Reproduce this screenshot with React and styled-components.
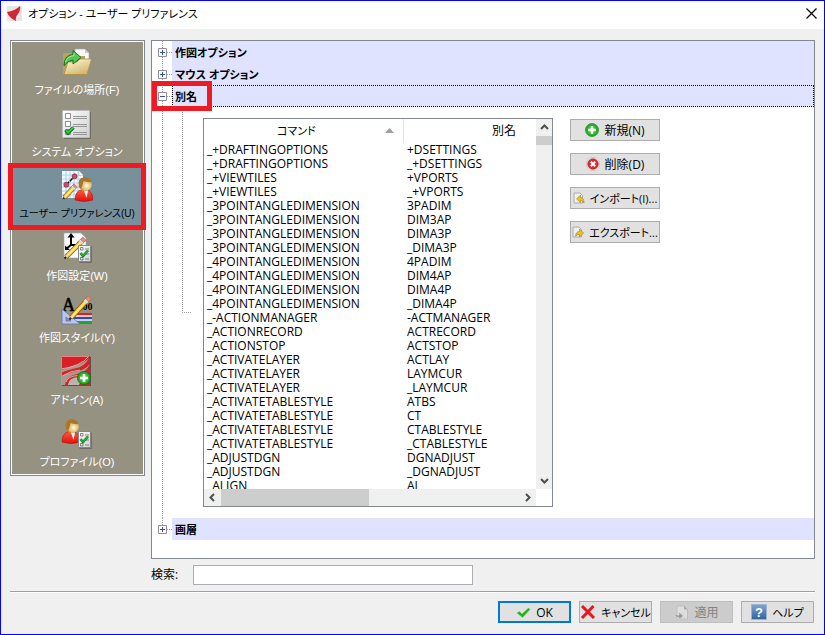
import React, { useState } from 'react';
import styled, { createGlobalStyle, css } from 'styled-components';

const GlobalStyle = createGlobalStyle`
    * {
        box-sizing: border-box;
    }

    body {
        margin: 0;
        background: #f0f0f0;
        color: #000;
        font: 12px/14px "Open Sans", "Noto Sans CJK JP", sans-serif;
        font-feature-settings: "palt";
    }

    button, input {
        font: inherit;
        font-feature-settings: inherit;
        color: inherit;
    }

    svg {
        flex: none;
    }
`;

const Dialog = styled.div`
    display: flex;
    flex-direction: column;
    min-height: 100vh;
    border: 1px solid #00f;
`;

const TitleBar = styled.header`
    display: flex;
    align-items: center;
    gap: 6px;
    height: 28px;
    padding: 0 7px 4px 6px;
    background: #fff;
`;

const Title = styled.h1`
    flex: 1;
    margin: 0;
    padding-top: 2px;
    font-size: 11px;
    font-weight: 400;
`;

const CloseButton = styled.button`
    display: flex;
    padding: 0;
    border: 0;
    background: none;
`;

const Main = styled.div`
    display: flex;
    align-items: flex-start;
    gap: 6px;
    padding: 11px 9px 0;
`;

const Sidebar = styled.nav`
    position: relative;
    flex: none;
    width: 135px;
    border: 1px solid #828790;

    &::after {
        content: '';
        position: absolute;
        inset: 0;
        border: 1px solid #fff;
        pointer-events: none;
    }
`;

const NavItem = styled.button`
    position: relative;
    display: flex;
    flex-direction: column;
    align-items: center;
    width: 100%;
    height: 62px;
    padding: 5px 1px 0 0;
    border: 0;
    white-space: nowrap;
    font-family: "Liberation Sans", "Noto Sans CJK JP", sans-serif;
    font-size: ${props => (props.$long ? 10 : 11)}px;
    line-height: 24px;
    background: ${props => (props.$active ? '#78909c' : '#969282')};
    color: ${props => (props.$active ? '#000' : '#fff')};
`;

const Marker = styled.span`
    position: absolute;
    z-index: 1;
    border: 5px solid #ed1c24;
    pointer-events: none;
    ${props => props.$around === 'nav' && css`
        inset: -2px -2px -3px -3px;
    `}
    ${props => props.$around === 'row' && css`
        inset: -4px auto -4px 0;
        width: 60px;
    `}
`;

const Panel = styled.section`
    flex: 1;
    min-width: 0;
    border: 1px solid #828790;
    padding-bottom: 18px;
    background: #fff;
`;

const TreeRow = styled.div`
    position: relative;
    display: flex;
    height: 22px;
`;

const dots = 'linear-gradient(#a0a0a0 50%, transparent 50%) 10px 0 / 1px 2px repeat-y';

const Gutter = styled.div`
    flex: none;
    display: flex;
    align-items: center;
    width: 20px;
    padding-left: 6px;
    background: ${props => (props.$last
        ? `linear-gradient(#fff, #fff) 0 100% / 100% 50% no-repeat, ${dots}`
        : dots)};

    &::after {
        content: '';
        flex: 1;
        border-top: ${props => (props.$plain ? '0' : '1px dotted #a0a0a0')};
    }
`;

const Expander = styled.button`
    display: flex;
    padding: 0;
    border: 0;
    background: none;
`;

const TreeTitle = styled.h2`
    flex: 1;
    margin: 0;
    padding-left: 2px;
    border: 1px ${props => (props.$focused ? 'dotted #000' : 'solid #dfe3ff')};
    background: #dfe3ff;
    font-size: 11px;
    font-weight: 700;
    line-height: 22px;
`;

const TreeBody = styled.div`
    display: flex;
`;

const Branch = styled.div`
    flex: none;
    width: 9px;
    height: 206px;
    margin: 0 12px 0 10px;
    border: dotted #a0a0a0;
    border-width: 0 0 1px 1px;
`;

const ListBox = styled.div`
    display: grid;
    grid-template-columns: 1fr 16px;
    grid-template-rows: 370px 17px;
    flex: 0 1 350px;
    min-width: 0;
    margin: 11px 17px 11px 0;
    border: 1px solid #828790;
`;

const Viewport = styled.div`
    overflow: hidden;
`;

const AliasTable = styled.table`
    width: 400px;
    table-layout: fixed;
    border-collapse: separate;
    border-spacing: 0;

    th {
        height: 24px;
        padding: 0;
        font-weight: 400;
    }

    th:first-child {
        border-right: 1px solid #e5e5e5;
    }

    td {
        height: 14px;
        padding: 0 3px;
        line-height: 14px;
    }
`;

const SortHeader = styled.span`
    display: flex;
    align-items: center;
    justify-content: space-between;
    padding: 0 9px 0 73px;
    font-size: 11px;
`;

const ScrollBar = styled.div`
    display: flex;
    flex-direction: ${props => (props.$vertical ? 'column' : 'row')};
    justify-content: space-between;
    background: #f0f0f0;
`;

const ScrollButton = styled.button`
    display: flex;
    align-items: center;
    justify-content: center;
    width: ${props => (props.$vertical ? 16 : 17)}px;
    height: 17px;
    padding: 0;
    border: 0;
    background: none;
`;

const Thumb = styled.div`
    background: #cdcdcd;
    ${props => (props.$vertical
        ? css`height: 9px; margin-bottom: auto;`
        : css`width: 148px; margin-right: auto;`)}
`;

const Actions = styled.div`
    display: flex;
    flex-direction: column;
    gap: 12px;
    flex: none;
    width: 90px;
    margin: 12px 0;
`;

const Button = styled.button`
    display: flex;
    align-items: center;
    justify-content: center;
    gap: 5px;
    height: 22px;
    padding: 0;
    white-space: nowrap;
    border: 1px solid #adadad;
    background: #e1e1e1;
    font-size: ${props => (props.$kana ? 11 : 12)}px;
    line-height: 18px;

    span {
        padding-top: 2px;
    }

    &:disabled {
        border-color: #bfbfbf;
        background: #ccc;
        color: #838383;
    }

    ${props => props.$primary && css`
        border: 2px solid #0078d7;
    `}
`;

const Search = styled.form`
    display: flex;
    align-items: center;
    padding: 6px 9px 6px 150px;
`;

const SearchLabel = styled.label`
    width: 42px;
`;

const SearchInput = styled.input`
    flex: 0 1 280px;
    min-width: 0;
    height: 20px;
    padding: 0 3px;
    border: 1px solid #abadb3;
    background: #fff;
`;

const Footer = styled.footer`
    display: grid;
    grid-template-columns: repeat(4, 73px);
    justify-content: end;
    gap: 8px;
    margin: 0 9px;
    padding: 9px 1px 11px;
    border-top: 1px solid #a0a0a0;
    box-shadow: inset 0 1px #fff;
`;

const Icon = ({ size = 32, box = 32, children, ...rest }) => (
    <svg width={size} height={size} viewBox={`0 0 ${box} ${box}`} aria-hidden="true" {...rest}>{children}</svg>
);

const HiddenSvg = styled.svg`
    position: absolute;
`;

const Gradients = () => (
    <HiddenSvg width="0" height="0" aria-hidden="true">
        <defs>
            <linearGradient id="folder" x2="0.6" y2="1">
                <stop stopColor="#fffbe2" />
                <stop offset="1" stopColor="#d4b76c" />
            </linearGradient>
            <linearGradient id="sheet" x2="1" y2="1">
                <stop stopColor="#fff" />
                <stop offset="1" stopColor="#cfcfcf" />
            </linearGradient>
            <linearGradient id="red" x2="0" y2="1">
                <stop stopColor="#ff5a3c" />
                <stop offset="1" stopColor="#e00f0f" />
            </linearGradient>
            <radialGradient id="face" cx="0.6" cy="0.6">
                <stop stopColor="#fffdd0" />
                <stop offset="1" stopColor="#cfa651" />
            </radialGradient>
            <radialGradient id="green">
                <stop stopColor="#62df62" />
                <stop offset="1" stopColor="#18a018" />
            </radialGradient>
            <linearGradient id="blue" x2="0" y2="1">
                <stop stopColor="#7fa6d3" />
                <stop offset="1" stopColor="#33629f" />
            </linearGradient>
        </defs>
    </HiddenSvg>
);

const Pencil = ({ x1, y1, x2, y2 }) => {
    const dx = x2 - x1;
    const dy = y2 - y1;
    const at = t => [x1 + dx * t, y1 + dy * t];
    const line = (from, to, color, width) => {
        const [ax, ay] = at(from);
        const [bx, by] = at(to);
        return <line x1={ax} y1={ay} x2={bx} y2={by} stroke={color} strokeWidth={width} />;
    };
    return (
        <g>
            {line(0.02, 0.12, '#222', 2)}
            {line(0.1, 0.98, '#8a5a10', 5)}
            {line(0.1, 0.2, '#f3d6a0', 3)}
            {line(0.18, 0.8, '#f6cf3a', 3.6)}
            {line(0.18, 0.78, '#fff09a', 1.2)}
            {line(0.77, 0.86, '#ddd', 4.4)}
            {line(0.86, 0.98, '#e98a80', 4.4)}
        </g>
    );
};

const Person = ({ x, y }) => (
    <g transform={`translate(${x} ${y})`}>
        <path d="M0 23 Q0 14 7 12.500 H11 Q18 14 18 23 Q9 26 0 23Z" fill="url(#red)" stroke="#b51010" strokeWidth="0.600" />
        <path d="M9 13.500 L13 13.500 L11.500 21Z" fill="#fff" />
        <circle cx="10.500" cy="7.500" r="6.300" fill="url(#face)" />
        <path d="M4 10 Q2 0.500 9.500 0.300 Q15.500 0.300 16.500 5 Q12 5.500 8.500 4 Q8 7.500 6 12 Q4.500 12 4 10Z" fill="#a8772b" />
    </g>
);

const Checklist = ({ x, y }) => (
    <g transform={`translate(${x} ${y})`}>
        <path d="M1.500 1.500 H14 V18 H1.500Z" fill="#555" opacity="0.6" />
        <path d="M0.500 0.500 H12.500 V16.500 H0.500Z" fill="url(#sheet)" stroke="#888" />
        <path d="M2.500 2.500 H5 V5 H2.500Z M2.500 12.500 H5 V15 H2.500Z M7 4 H11 M7 14 H11 M8 9 H11" fill="none" stroke="#777" strokeWidth="0.900" />
        <path d="M2.500 8 L5 11 L10 5.500" fill="none" stroke="#0c8a22" strokeWidth="2.600" />
        <path d="M2.500 8 L5 10.800 L10 5.500" fill="none" stroke="#3bc452" strokeWidth="1" />
    </g>
);

const FilesIcon = () => (
    <Icon>
        <path d="M14 3 H24 L28 7 V17 H14Z" fill="#fafafa" stroke="#aaa" strokeWidth="0.700" />
        <path d="M24 3 V7 H28Z" fill="#ccc" />
        <path d="M2 9 Q2 7 4 7 H10 L12 10 H24 V28 H2Z" fill="#b9a15f" />
        <path d="M3 28.500 L7 16 H16 L19 13 H30.500 L26 28.500Z" fill="url(#folder)" stroke="#b08f42" strokeWidth="0.800" />
        <path d="M3 20 Q3 9 12 8.500 V4.500 L20 11.500 L12 18 V14 Q7 14 3 20Z" fill="#53c653" stroke="#0b7d22" strokeWidth="1" />
        <path d="M4.500 16 Q6.500 10 13 9.700 V7" fill="none" stroke="#b3f0a4" strokeWidth="0.900" />
    </Icon>
);

const SystemIcon = () => (
    <Icon>
        <path d="M3 4 H30 V31 H3Z" fill="#555" opacity="0.6" />
        <path d="M1.500 2.500 H28.500 V29.500 H1.500Z" fill="url(#sheet)" stroke="#bbb" />
        <path d="M4.500 5.500 H9.500 V10.500 H4.500Z M4.500 13.500 H9.500 V18.500 H4.500Z M4.500 21.500 H9.500 V26.500 H4.500Z" fill="#fff" stroke="#8c8c8c" />
        <path d="M12 8.500 H26 M12 10.500 H26 M12 16.500 H26 M12 18.500 H26 M12 24.500 H26 M12 26.500 H26" stroke="#8d8d8d" strokeWidth="0.900" />
        <path d="M4.500 22 L7 25 L12.500 19.500" fill="none" stroke="#087516" strokeWidth="3.400" />
        <path d="M4.800 22 L7 24.600 L12.200 19.600" fill="none" stroke="#39cf4a" strokeWidth="1.600" />
    </Icon>
);

const UserIcon = () => (
    <Icon>
        <path d="M1 1 H18 L22 5 V28 H1Z" fill="#f4fbff" />
        <path d="M5 1 V28 M9 1 V28 M13 1 V28 M17 1 V28 M1 5 H21 M1 9 H22 M1 13 H22 M1 17 H22 M1 21 H22 M1 25 H22" stroke="#9dc8e8" strokeWidth="0.800" />
        <path d="M18 1 V5.500 H22" fill="#fff" stroke="#8ca" strokeWidth="0.600" />
        <path d="M5.300 14.700 L13.600 6.300" stroke="#111" strokeDasharray="4 1" strokeWidth="1.400" />
        <circle cx="5.300" cy="14.700" r="2.500" fill="#c8506c" stroke="#8c2040" strokeWidth="0.700" />
        <circle cx="13.600" cy="6.300" r="2.500" fill="#c8506c" stroke="#8c2040" strokeWidth="0.700" />
        <Pencil x1={2} y1={29} x2={15} y2={15} />
        <Person x={14} y={7} />
    </Icon>
);

const SettingsIcon = () => (
    <Icon>
        <path d="M3 1 H20 L25 6 V26 H3Z" fill="#f8fafc" stroke="#9aa9b5" strokeWidth="0.600" />
        <path d="M10 13 V3 M10 13 H19 M10 13 L5 17" stroke="#000" strokeWidth="2" />
        <path d="M6.500 5.500 L10 1 L13.500 5.500Z M16 9.500 L21 13 L16 16.500Z M4 13.500 V18 H9Z" />
        <Pencil x1={3} y1={27} x2={24} y2={6} />
        <Checklist x={17} y={13} />
    </Icon>
);

const StyleIcon = () => (
    <Icon>
        <text x="1" y="17" fontFamily="Liberation Serif" fontSize="18" stroke="#000" strokeWidth="0.500">A</text>
        <text x="19" y="16" fontFamily="Liberation Serif" fontSize="10" fontWeight="700">.00</text>
        <path d="M13 19 H31 V23 H13Z" fill="#df2020" />
        <path d="M13 23 H31 V27 H13Z" fill="#2749c9" />
        <path d="M13 22 H31 M13 26 H31" stroke="#fff" strokeWidth="1.400" />
        <path d="M13 27 H31 V30 H13Z" fill="#17a637" />
        <path fillRule="evenodd" d="M1 15 L19 30 H1Z M5 23 V27 H10Z" fill="#b8c5ef" stroke="#5e6ea8" strokeWidth="0.700" />
        <Pencil x1={8} y1={26} x2={29} y2={3} />
    </Icon>
);

const AddInIcon = () => (
    <Icon>
        <path d="M1 1 H30 V30 H1Z" fill="#5a3c36" opacity="0.8" />
        <path d="M0 0 H29 V29 H0Z" fill="#d91f26" />
        <path d="M0 14 Q8 11 16 9 Q23 7 28 2 Q24 10 16 12 Q6 14 0 17Z" fill="#a49a90" />
        <path d="M0 21 Q5 17 15 15.500 Q24 14 29 8 Q25 17 16 18 Q5 20 4 29 H0 V24Z" fill="#a49a90" />
        <path d="M7 28 Q8 22 17 21 L27 16 Q20 24 18 29 H7Z" fill="#bcb4ac" />
        <path d="M0 13 Q20 10 27 1 M1 20 Q10 14.500 19 14 M5 26 Q7 20 17 19.500" fill="none" stroke="#eed8d4" strokeWidth="0.700" />
        <path d="M0.500 28 V0.500 H28" fill="none" stroke="#ee7d7d" />
        <circle cx="23" cy="22" r="6.500" fill="url(#green)" stroke="#087018" strokeWidth="0.800" />
        <path d="M23 18 V26 M19 22 H27" stroke="#fff" strokeWidth="2.600" />
    </Icon>
);

const ProfileIcon = () => (
    <Icon>
        <Person x={1} y={1} />
        <Checklist x={17} y={13} />
    </Icon>
);

const AppLogo = () => (
    <Icon size={15} box={15}>
        <path d="M0 0 H15 V15 H0Z" fill="#e9e4e4" />
        <path d="M0 6 Q8 5 13 0 Q14 3 11 8 Q8 11 9 15 Q2 12 0 6Z" fill="#d5202f" />
        <path d="M2 8 Q9 8 13 2 M4 11 Q7 9 10 7" fill="none" stroke="#a34a55" strokeWidth="0.800" />
    </Icon>
);

const NewIcon = () => (
    <Icon size={14} box={14}>
        <circle cx="7" cy="7" r="6.500" fill="url(#green)" stroke="#249a2c" strokeWidth="0.800" />
        <path d="M7 3 V11 M3 7 H11" stroke="#fff" strokeWidth="2.400" />
    </Icon>
);

const DeleteIcon = () => (
    <Icon size={14} box={14}>
        <circle cx="7" cy="7" r="6.600" fill="#f5f5f5" stroke="#b5b5b5" strokeWidth="0.600" />
        <circle cx="7" cy="7" r="5.300" fill="#d62e35" stroke="#a52129" strokeWidth="0.600" />
        <path d="M4.800 4.800 L9.200 9.200 M9.200 4.800 L4.800 9.200" stroke="#fff" strokeWidth="2" />
    </Icon>
);

const TransferIcon = ({ out }) => (
    <Icon size={12} box={12}>
        <path d="M1 1 H7 L9.500 3.500 V11 H1Z" fill="#f0f0f0" stroke="#aaa" />
        {out
            ? <path d="M3.500 10 Q4 5.500 7.500 5.500 V3 L11.500 7 L7.500 11 V8.500 Q5 8.500 3.500 10Z" fill="#edc12e" stroke="#b38814" strokeWidth="0.700" />
            : <path d="M11 11 Q11 5.500 7.500 5.500 V3 L3.500 7 L7.500 10.500 V8.300 Q9.500 8.300 11 11Z" fill="#edc12e" stroke="#b38814" strokeWidth="0.700" />}
    </Icon>
);

const OkIcon = () => (
    <Icon size={15} box={15}>
        <path d="M1 8 L3.500 6.500 L6 9 L12.500 3 L14 4.500 L6.500 12.500Z" fill="#20b41c" stroke="#58cb4d" strokeWidth="0.500" />
    </Icon>
);

const CancelIcon = () => (
    <Icon size={16} box={16}>
        <path d="M2 2 L14 14 M13.500 2 L2 14" stroke="#e81620" strokeWidth="3" />
    </Icon>
);

const ApplyIcon = () => (
    <Icon size={15} box={15}>
        <path d="M3 1 H10 L13.500 4.500 V14 H3Z" fill="#dedede" stroke="#b6b6b6" strokeWidth="0.700" />
        <path d="M10 1 V4.500 H13.500" fill="#aaa" />
        <path d="M0.500 8 Q2 11 5 10 V7 L9.500 11 L5 14.500 V12.500 Q0.500 12.500 0.500 8Z" fill="#999" stroke="#ddd" strokeWidth="0.600" />
    </Icon>
);

const HelpIcon = () => (
    <Icon size={16} box={16}>
        <path d="M0.500 0.500 H15.500 V15.500 H0.500Z" fill="url(#blue)" stroke="#9bb4d0" />
        <text x="8" y="13" textAnchor="middle" fill="#fff" fontFamily="Liberation Sans" fontSize="13" fontWeight="700">?</text>
    </Icon>
);

const arrows = {
    up: 'M1 6 L4.500 2.500 L8 6',
    down: 'M1 3 L4.500 6.500 L8 3',
    left: 'M6 1 L2.500 4.500 L6 8',
    right: 'M3 1 L6.500 4.500 L3 8',
};

const Arrow = ({ dir }) => (
    <ScrollButton type="button" tabIndex={-1} aria-label={dir} $vertical={dir === 'up' || dir === 'down'}>
        <Icon size={9} box={9}><path d={arrows[dir]} fill="none" stroke="#505050" strokeWidth="2" /></Icon>
    </ScrollButton>
);

const pages = [
    { label: 'ファイルの場所(F)', icon: FilesIcon },
    { label: 'システム オプション', icon: SystemIcon },
    { label: 'ユーザー プリファレンス(U)', icon: UserIcon, long: true },
    { label: '作図設定(W)', icon: SettingsIcon },
    { label: '作図スタイル(Y)', icon: StyleIcon },
    { label: 'アドイン(A)', icon: AddInIcon },
    { label: 'プロファイル(O)', icon: ProfileIcon },
];

const aliases = [
    ['_+DRAFTINGOPTIONS', '+DSETTINGS'],
    ['_+DRAFTINGOPTIONS', '_+DSETTINGS'],
    ['_+VIEWTILES', '+VPORTS'],
    ['_+VIEWTILES', '_+VPORTS'],
    ['_3POINTANGLEDIMENSION', '3PADIM'],
    ['_3POINTANGLEDIMENSION', 'DIM3AP'],
    ['_3POINTANGLEDIMENSION', 'DIMA3P'],
    ['_3POINTANGLEDIMENSION', '_DIMA3P'],
    ['_4POINTANGLEDIMENSION', '4PADIM'],
    ['_4POINTANGLEDIMENSION', 'DIM4AP'],
    ['_4POINTANGLEDIMENSION', 'DIMA4P'],
    ['_4POINTANGLEDIMENSION', '_DIMA4P'],
    ['_-ACTIONMANAGER', '-ACTMANAGER'],
    ['_ACTIONRECORD', 'ACTRECORD'],
    ['_ACTIONSTOP', 'ACTSTOP'],
    ['_ACTIVATELAYER', 'ACTLAY'],
    ['_ACTIVATELAYER', 'LAYMCUR'],
    ['_ACTIVATELAYER', '_LAYMCUR'],
    ['_ACTIVATETABLESTYLE', 'ATBS'],
    ['_ACTIVATETABLESTYLE', 'CT'],
    ['_ACTIVATETABLESTYLE', 'CTABLESTYLE'],
    ['_ACTIVATETABLESTYLE', '_CTABLESTYLE'],
    ['_ADJUSTDGN', 'DGNADJUST'],
    ['_ADJUSTDGN', '_DGNADJUST'],
    ['_ALIGN', 'AL'],
];

const TreeNode = ({ title, open, focused, marked, last }) => (
    <TreeRow>
        <Gutter $last={last}>
            <Expander type="button" aria-label={title} aria-expanded={!!open}>
                <Icon size={9} box={9}>
                    <path d="M0.500 0.500 H8.500 V8.500 H0.500Z" fill="#f8f8f8" stroke="#919191" />
                    <path d={open ? 'M2 4.500 H7' : 'M2 4.500 H7 M4.500 2 V7'} stroke="#3c4f9c" />
                </Icon>
            </Expander>
        </Gutter>
        <TreeTitle $focused={focused}>{title}</TreeTitle>
        {marked && <Marker $around="row" />}
    </TreeRow>
);

const AliasList = () => (
    <ListBox>
        <Viewport>
            <AliasTable>
                <thead>
                    <tr>
                        <th scope="col">
                            <SortHeader>
                                コマンド
                                <Icon size={9} box={9}><path d="M0 6 L4.500 1 L9 6Z" fill="#a0a0a0" /></Icon>
                            </SortHeader>
                        </th>
                        <th scope="col">別名</th>
                    </tr>
                </thead>
                <tbody>
                    {aliases.map(([command, alias]) => (
                        <tr key={command + alias}>
                            <td>{command}</td>
                            <td>{alias}</td>
                        </tr>
                    ))}
                </tbody>
            </AliasTable>
        </Viewport>
        <ScrollBar $vertical>
            <Arrow dir="up" />
            <Thumb $vertical />
            <Arrow dir="down" />
        </ScrollBar>
        <ScrollBar>
            <Arrow dir="left" />
            <Thumb />
            <Arrow dir="right" />
        </ScrollBar>
    </ListBox>
);

const App = () => {
    const [page, setPage] = useState(2);
    const [query, setQuery] = useState('');

    return (
        <Dialog>
            <GlobalStyle />
            <Gradients />
            <TitleBar>
                <AppLogo />
                <Title>オプション - ユーザー プリファレンス</Title>
                <CloseButton type="button" aria-label="閉じる">
                    <Icon size={11} box={11}><path d="M0.500 0.500 L10.500 10.500 M10.500 0.500 L0.500 10.500" stroke="#000" strokeWidth="1.200" /></Icon>
                </CloseButton>
            </TitleBar>
            <Main>
                <Sidebar>
                    {pages.map(({ label, icon: PageIcon, long }, index) => (
                        <NavItem key={label} type="button" $active={index === page} $long={long} onClick={() => setPage(index)}>
                            <PageIcon />
                            {label}
                            {index === page && <Marker $around="nav" />}
                        </NavItem>
                    ))}
                </Sidebar>
                <Panel>
                    <TreeNode title="作図オプション" />
                    <TreeNode title="マウス オプション" />
                    <TreeNode title="別名" open focused marked />
                    <TreeBody>
                        <Gutter $plain />
                        <Branch />
                        <AliasList />
                        <Actions>
                            <Button type="button"><NewIcon /><span>新規(N)</span></Button>
                            <Button type="button"><DeleteIcon /><span>削除(D)</span></Button>
                            <Button type="button" $kana><TransferIcon /><span>インポート(I)...</span></Button>
                            <Button type="button" $kana><TransferIcon out /><span>エクスポート...</span></Button>
                        </Actions>
                    </TreeBody>
                    <TreeNode title="画層" last />
                </Panel>
            </Main>
            <Search onSubmit={event => event.preventDefault()}>
                <SearchLabel htmlFor="search">検索:</SearchLabel>
                <SearchInput id="search" value={query} onChange={event => setQuery(event.target.value)} />
            </Search>
            <Footer>
                <Button type="button" $primary><OkIcon /><span>OK</span></Button>
                <Button type="button" $kana><CancelIcon /><span>キャンセル</span></Button>
                <Button type="button" disabled><ApplyIcon /><span>適用</span></Button>
                <Button type="button" $kana><HelpIcon /><span>ヘルプ</span></Button>
            </Footer>
        </Dialog>
    );
};

export default App;
